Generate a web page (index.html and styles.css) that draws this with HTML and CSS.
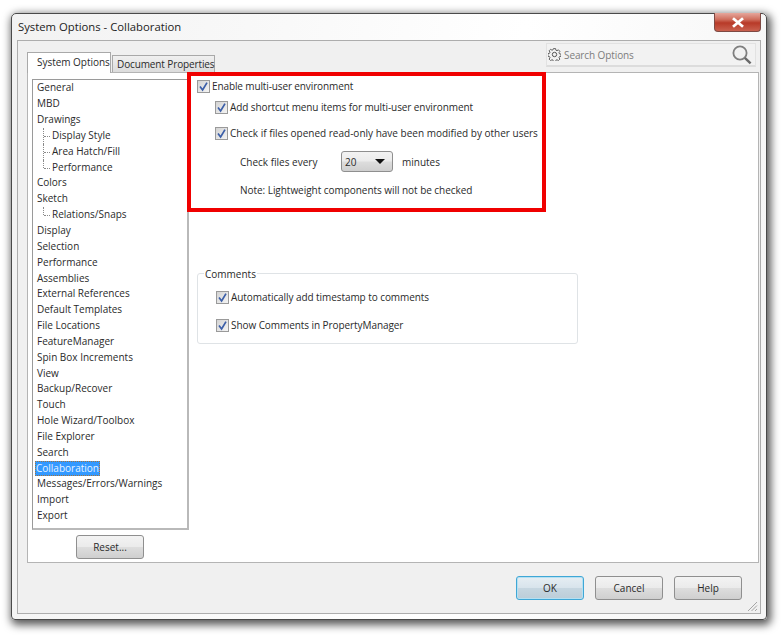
FILE: index.html
```html
<!DOCTYPE html>
<html lang="en">
<head>
<meta charset="utf-8">
<title>System Options - Collaboration</title>
<link rel="stylesheet" href="styles.css">
</head>
<body>
<svg class="defs" width="0" height="0" aria-hidden="true">
  <symbol id="tick" viewBox="0 0 13 13">
    <path d="M3 6.5 L5.6 10 L10 2.6" fill="none" stroke="#3b5ea8" stroke-width="1.7"/>
  </symbol>
</svg>
<div class="window">
  <div class="titlebar">System Options - Collaboration</div>
  <div class="close">
    <svg width="14" height="11" viewBox="0 0 14 11"><path d="M2 1.2 L12 9.8 M12 1.2 L2 9.8" stroke="#fff" stroke-width="2.8" fill="none"/></svg>
  </div>
  <div class="frame">
    <div class="head">
      <div class="tabs">
        <div class="tab tab-on">System Options</div>
        <div class="tab tab-off">Document Properties</div>
      </div>
      <div class="search">
        <svg class="gear" width="13" height="13" viewBox="0 0 13 13"><path d="M5.4 .6h2.2l.3 1.6 1.1.5 1.4-.9 1.5 1.5-.9 1.4.5 1.1 1.6.3v2.2l-1.6.3-.5 1.1.9 1.4-1.5 1.5-1.4-.9-1.1.5-.3 1.6H5.4l-.3-1.6-1.1-.5-1.4.9-1.5-1.5.9-1.4-.5-1.1-1.6-.3V5.6l1.6-.3.5-1.1-.9-1.4L2.6 1.3l1.4.9 1.1-.5z" fill="none" stroke="#555" stroke-width=".9"/><circle cx="6.5" cy="6.5" r="2.2" fill="none" stroke="#555" stroke-width="1"/></svg>
        <span class="search-text">Search Options</span>
        <svg class="lens" width="20" height="20" viewBox="0 0 20 20"><circle cx="8" cy="8" r="6.6" fill="none" stroke="#7f7f7f" stroke-width="1.8"/><path d="M12.8 12.8 L18.6 18.4" stroke="#6a6a6a" stroke-width="2.4" fill="none"/></svg>
      </div>
    </div>
    <div class="pane">
      <div class="left">
        <ul class="list">
          <li>General</li>
          <li>MBD</li>
          <li>Drawings</li>
          <li class="sub"><span class="twig"></span>Display Style</li>
          <li class="sub"><span class="twig"></span>Area Hatch/Fill</li>
          <li class="sub"><span class="twig twig-end"></span>Performance</li>
          <li>Colors</li>
          <li>Sketch</li>
          <li class="sub"><span class="twig twig-end"></span>Relations/Snaps</li>
          <li>Display</li>
          <li>Selection</li>
          <li>Performance</li>
          <li>Assemblies</li>
          <li>External References</li>
          <li>Default Templates</li>
          <li>File Locations</li>
          <li>FeatureManager</li>
          <li>Spin Box Increments</li>
          <li>View</li>
          <li>Backup/Recover</li>
          <li>Touch</li>
          <li>Hole Wizard/Toolbox</li>
          <li>File Explorer</li>
          <li>Search</li>
          <li><span class="selected">Collaboration</span></li>
          <li>Messages/Errors/Warnings</li>
          <li>Import</li>
          <li>Export</li>
        </ul>
        <div class="btn reset">Reset...</div>
      </div>
      <div class="options">
        <div class="opt opt-main"><span class="cb"><svg width="13" height="13"><use href="#tick"/></svg></span>Enable multi-user environment</div>
        <div class="opt opt-a"><span class="cb"><svg width="13" height="13"><use href="#tick"/></svg></span>Add shortcut menu items for multi-user environment</div>
        <div class="opt opt-b"><span class="cb"><svg width="13" height="13"><use href="#tick"/></svg></span>Check if files opened read-only have been modified by other users</div>
        <div class="every">
          <span class="every-label">Check files every</span>
          <span class="select"><span>20</span><i class="arrow"></i></span>
          <span>minutes</span>
        </div>
        <div class="note">Note: Lightweight components will not be checked</div>
        <div class="group">
          <div class="legend">Comments</div>
          <div class="opt opt-c"><span class="cb"><svg width="13" height="13"><use href="#tick"/></svg></span>Automatically add timestamp to comments</div>
          <div class="opt opt-d"><span class="cb"><svg width="13" height="13"><use href="#tick"/></svg></span>Show Comments in PropertyManager</div>
        </div>
      </div>
      <div class="redbox"></div>
    </div>
    <div class="footer">
      <div class="btn btn-default">OK</div>
      <div class="btn">Cancel</div>
      <div class="btn">Help</div>
      <svg class="grip" width="12" height="12" viewBox="0 0 12 12"><path d="M11 2 L2 11 M11 5.5 L5.5 11 M11 9 L9 11" stroke="#a5a5a5" stroke-width="1" fill="none"/></svg>
    </div>
  </div>
</div>
</body>
</html>
```
FILE: styles.css
```css
* { box-sizing: border-box; }
html, body { margin: 0; padding: 0; }
body {
  width: 782px;
  height: 635px;
  background: #fff;
  overflow: hidden;
  font-family: "Open Sans", "Noto Sans", sans-serif;
  font-size: 10px;
  color: #2a2a2a;
  padding: 13px 0 0 11px;
}
.defs { position: absolute; }
.window {
  position: relative;
  width: 756px;
  height: 607px;
  border: 1px solid #4a4a4a;
  border-radius: 5px 5px 4px 4px;
  background: linear-gradient(100deg, #f2f2f2 0%, #ffffff 60%, #f4f4f4 100%);
  box-shadow: 2px 3px 9px 2px rgba(0,0,0,.65);
  padding: 0 5px;
}
.titlebar {
  height: 26px;
  padding: 4px 1px 0;
  font-size: 11.3px;
  line-height: 17px;
  color: #222;
  white-space: nowrap;
}
.close {
  position: absolute;
  top: -1px;
  right: 5px;
  width: 47px;
  height: 19px;
  display: flex;
  align-items: center;
  justify-content: center;
  border: 1px solid #7e4a44;
  border-top: 0;
  border-radius: 0 0 4px 4px;
  background: linear-gradient(#e6a79c 0%, #d0705f 35%, #b83a28 55%, #c9614f 100%);
}
.frame {
  height: 574px;
  background: #f0f0f0;
  border: 1px solid #adadad;
  padding: 0 2px 0 9px;
}
.head {
  height: 31px;
  display: flex;
  justify-content: space-between;
}
.tabs {
  display: flex;
  align-items: flex-end;
  gap: 1px;
}
.tab {
  border: 1px solid #a9a9a9;
  border-bottom: 0;
  white-space: nowrap;
}
.tab-on {
  position: relative;
  top: 1px;
  width: 84px;
  height: 21px;
  background: #fff;
  padding-left: 9px;
  line-height: 19px;
  letter-spacing: -.03px;
  z-index: 1;
}
.tab-off {
  width: 103px;
  height: 17px;
  padding-left: 4px;
  line-height: 17px;
  letter-spacing: -.12px;
  background: linear-gradient(#f0f0f0, #dcdcdc);
}
.search {
  width: 210px;
  height: 24px;
  margin: 2px 2px 0 0;
  display: flex;
  align-items: center;
  background: #f2f2f2;
  border: 1px solid #e2e2e2;
  border-bottom: 2px solid #dcdcdc;
  padding-left: 1px;
  color: #7d7d7d;
}
.gear { flex: none; }
.search-text { margin-left: 3px; flex: 1; letter-spacing: -.1px; }
.lens { margin-right: 3px; }
.pane {
  position: relative;
  width: 732px;
  height: 491px;
  background: #fff;
  border: 1px solid #b4b4b4;
  display: flex;
}
.left {
  width: 160px;
  padding: 6px 0 0 4px;
  flex: none;
}
.list {
  list-style: none;
  margin: 0;
  width: 157px;
  height: 451px;
  padding: .4px 0 0 4px;
  border: 1px solid #9a9a9a;
  border-bottom: 2px solid #b9b9b9;
  border-right: 2px solid #b9b9b9;
  display: grid;
  grid-template-rows: repeat(28, 15.85px);
  align-content: start;
}
.list li {
  line-height: 15.85px;
  white-space: nowrap;
  display: flex;
}
.sub { padding-left: 6px; }
.twig {
  width: 7px;
  margin-right: 2px;
  border-left: 1px dotted #8a8a8a;
}
.twig::after {
  content: "";
  display: block;
  height: 8px;
  border-bottom: 1px dotted #8a8a8a;
}
.twig-end { height: 8px; }
.selected {
  display: block;
  margin-left: -2px;
  padding: 0 1px;
  height: 15px;
  line-height: 14px;
  background: #3399ff;
  color: #e8f3ff;
  outline: 1px dotted #a5733a;
  outline-offset: -1px;
}
.btn {
  width: 68px;
  height: 24px;
  display: flex;
  align-items: center;
  justify-content: center;
  border: 1px solid #8f8f8f;
  border-radius: 3px;
  background: linear-gradient(#f3f3f3 0%, #ebebeb 48%, #dddddd 52%, #cfcfcf 100%);
}
.reset { margin: 5px 0 0 44px; }
.options {
  flex: 1;
  padding: 0 0 0 9px;
  color: #2a2a2a;
}
.opt {
  display: flex;
  align-items: center;
  height: 14px;
  white-space: nowrap;
}
.opt-a, .opt-b, .opt-c, .opt-d { margin-left: 18px; }
.opt-main { margin-top: 6px; letter-spacing: -.12px; }
.opt-a { margin-top: 7px; letter-spacing: -.09px; }
.opt-b { margin-top: 12px; }
.cb {
  flex: none;
  width: 13px;
  height: 13px;
  margin-right: 2px;
  border: 1px solid #9a9a9a;
  background: linear-gradient(135deg, #d3d3d3, #f4f4f4);
  display: block;
  overflow: hidden;
}
.cb svg { display: block; margin: -1px 0 0 -1px; }
.every {
  display: flex;
  align-items: center;
  margin: 11px 0 0 43px;
  height: 21px;
}
.every-label { width: 101px; }
.select {
  width: 52px;
  height: 21px;
  margin-right: 9px;
  padding: 0 7px 0 3px;
  display: flex;
  align-items: center;
  justify-content: space-between;
  border: 1px solid #8f8f8f;
  border-radius: 3px;
  background: linear-gradient(#f3f3f3 0%, #ebebeb 48%, #dddddd 52%, #cfcfcf 100%);
}
.arrow {
  width: 0;
  height: 0;
  border-left: 5px solid transparent;
  border-right: 5px solid transparent;
  border-top: 5px solid #111;
}
.note {
  margin: 10px 0 0 43px;
  height: 16px;
  line-height: 16px;
  letter-spacing: -.04px;
}
.group {
  position: relative;
  width: 381px;
  height: 71px;
  margin-top: 75px;
  border: 1px solid #dfe3e6;
  border-radius: 3px;
  padding: 16px 0 0 0;
}
.legend {
  position: absolute;
  top: -7px;
  left: 6px;
  padding: 0 1px;
  line-height: 14px;
  background: #fff;
}
.opt-c { letter-spacing: -.07px; }
.opt-d { margin-top: 14px; letter-spacing: -.07px; }
.redbox {
  position: absolute;
  left: 159px;
  top: -1px;
  width: 359px;
  height: 140px;
  border: 4px solid #f00000;
}
.footer {
  position: relative;
  height: 49px;
  display: flex;
  justify-content: flex-end;
  gap: 11px;
  padding: 13px 16px 0 0;
}
.btn-default {
  border-color: #3fa7d6;
  box-shadow: inset 0 0 0 1px #b5e0f2;
  background: linear-gradient(#e6eef3 0%, #d8e4ec 48%, #c6d6e0 52%, #bccdd8 100%);
}
.grip {
  position: absolute;
  right: 0;
  bottom: 0;
}
```
